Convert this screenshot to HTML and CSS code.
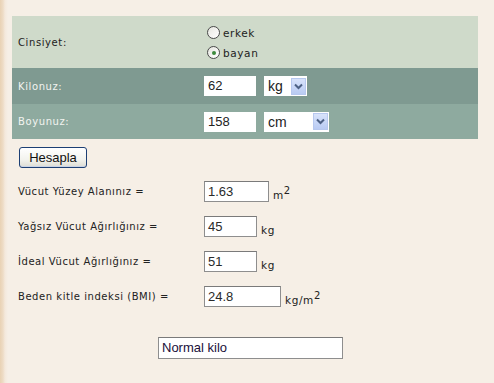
FILE: index.html
```html
<!DOCTYPE html>
<html lang="tr">
<head>
<meta charset="utf-8">
<title>Vücut hesaplayıcı</title>
<link rel="stylesheet" href="styles.css">
</head>
<body>
<div class="page">
  <div class="form-table">
    <div class="row row-gender">
      <div class="label">Cinsiyet:</div>
      <div class="value radios">
        <label class="radio"><span class="radio-dot"></span><span>erkek</span></label>
        <label class="radio"><span class="radio-dot checked"></span><span>bayan</span></label>
      </div>
    </div>
    <div class="row row-weight">
      <div class="label light">Kilonuz:</div>
      <div class="value controls">
        <div class="field">62</div>
        <div class="select select-kg"><span class="select-text">kg</span><span class="arrow"><svg width="9" height="7" viewBox="0 0 9 7"><path d="M1 1.5 L4.5 5 L8 1.5" fill="none" stroke="#4d6185" stroke-width="2"/></svg></span></div>
      </div>
    </div>
    <div class="row row-height">
      <div class="label light">Boyunuz:</div>
      <div class="value controls">
        <div class="field">158</div>
        <div class="select select-cm"><span class="select-text">cm</span><span class="arrow"><svg width="9" height="7" viewBox="0 0 9 7"><path d="M1 1.5 L4.5 5 L8 1.5" fill="none" stroke="#4d6185" stroke-width="2"/></svg></span></div>
      </div>
    </div>
  </div>

  <button class="btn" type="button">Hesapla</button>

  <div class="results">
    <div class="result">
      <div class="rlabel">Vücut Yüzey Alanınız =</div>
      <div class="rbox w65">1.63</div>
      <div class="unit">m<sup>2</sup></div>
    </div>
    <div class="result">
      <div class="rlabel">Yağsız Vücut Ağırlığınız =</div>
      <div class="rbox w53">45</div>
      <div class="unit">kg</div>
    </div>
    <div class="result">
      <div class="rlabel">İdeal Vücut Ağırlığınız =</div>
      <div class="rbox w53">51</div>
      <div class="unit">kg</div>
    </div>
    <div class="result">
      <div class="rlabel">Beden kitle indeksi (BMI) =</div>
      <div class="rbox w77">24.8</div>
      <div class="unit">kg/m<sup>2</sup></div>
    </div>
  </div>

  <div class="verdict-wrap">
    <div class="rbox verdict">Normal kilo</div>
  </div>
</div>
</body>
</html>
```

FILE: styles.css
```css
html, body {
  margin: 0;
  padding: 0;
}
body {
  width: 494px;
  height: 383px;
  overflow: hidden;
  background: linear-gradient(to right, #e9d2b4 0, #eedcc6 3px, #f4e9dc 5px, #f6efe6 8px);
  font-family: "DejaVu Sans", Verdana, sans-serif;
  font-size: 10px;
  color: #222;
}
.page {
  padding: 16px 0 0 12px;
}
.form-table {
  width: 466px;
  display: flex;
  flex-direction: column;
}
.row {
  display: grid;
  grid-template-columns: 192px 1fr;
  align-items: center;
}
.row-gender {
  height: 52px;
  background: #cfdaca;
}
.row-weight {
  height: 36px;
  background: #7f9a91;
}
.row-height {
  height: 35px;
  background: #8eaa9f;
}
.label {
  padding-left: 6px;
  letter-spacing: 0.6px;
  color: #222;
}
.label.light {
  color: #f2f4f0;
}
.radios {
  display: flex;
  flex-direction: column;
  gap: 7px;
  padding-left: 3px;
  padding-top: 1px;
}
.radio {
  display: flex;
  align-items: center;
  gap: 3px;
  height: 13px;
  letter-spacing: 0.6px;
  font-size: 10.5px;
}
.radio-dot {
  width: 11px;
  height: 11px;
  border: 1px solid #4a4a4a;
  border-radius: 50%;
  background: linear-gradient(135deg, #e6e6e0, #ffffff);
  display: flex;
  align-items: center;
  justify-content: center;
}
.radio-dot.checked::after {
  content: "";
  width: 4px;
  height: 4px;
  border-radius: 50%;
  background: #3c8a3c;
}
.controls {
  display: flex;
  align-items: center;
  gap: 8px;
}
.field {
  width: 48px;
  height: 20px;
  background: #fff;
  padding-left: 4px;
  box-sizing: content-box;
  font-family: "Liberation Sans", Arial, sans-serif;
  font-size: 13px;
  line-height: 20px;
  color: #222;
}
.select {
  height: 20px;
  background: #fff;
  display: flex;
  align-items: center;
  justify-content: space-between;
  font-family: "Liberation Sans", Arial, sans-serif;
  font-size: 14px;
  color: #222;
  box-sizing: border-box;
  padding: 2px 1px 2px 4px;
}
.select-kg {
  width: 43px;
}
.select-cm {
  width: 65px;
}
.arrow {
  width: 15px;
  height: 17px;
  box-sizing: border-box;
  border: 1px solid #b7c8ef;
  background: linear-gradient(#d8e3fb, #b9cbf3);
  display: flex;
  align-items: center;
  justify-content: center;
}
.btn {
  margin: 8px 0 0 7px;
  width: 68px;
  height: 21px;
  border: 1px solid #1d3f74;
  border-radius: 3px;
  background: linear-gradient(#ffffff 0%, #f3f3ee 60%, #dcdcd4 100%);
  box-shadow: inset 0 -1px 0 #c9d3e6;
  font-family: "Liberation Sans", Arial, sans-serif;
  font-size: 13px;
  color: #111;
  padding: 0;
  display: block;
}
.results {
  display: flex;
  flex-direction: column;
  gap: 14px;
  margin-top: 13px;
}
.result {
  display: flex;
  align-items: flex-end;
  height: 21px;
}
.rlabel {
  width: 186px;
  padding-left: 6px;
  letter-spacing: 0.55px;
  align-self: center;
  color: #222;
}
.rbox {
  height: 21px;
  box-sizing: border-box;
  border: 1px solid #8e8e8e;
  border-top-color: #7a7a7a;
  background: #fff;
  font-family: "Liberation Sans", Arial, sans-serif;
  font-size: 13px;
  line-height: 19px;
  padding-left: 3px;
  color: #2a2a2a;
}
.w65 { width: 65px; }
.w53 { width: 53px; }
.w77 { width: 77px; }
.unit {
  margin-left: 4px;
  letter-spacing: 0.6px;
  font-size: 10.5px;
  line-height: 14px;
  color: #222;
}
.unit sup {
  font-size: 10px;
  vertical-align: 5px;
  line-height: 0;
}
.verdict-wrap {
  margin-top: 30px;
  padding-left: 146px;
}
.verdict {
  width: 185px;
  height: 22px;
  line-height: 20px;
  color: #20103a;
}
```
